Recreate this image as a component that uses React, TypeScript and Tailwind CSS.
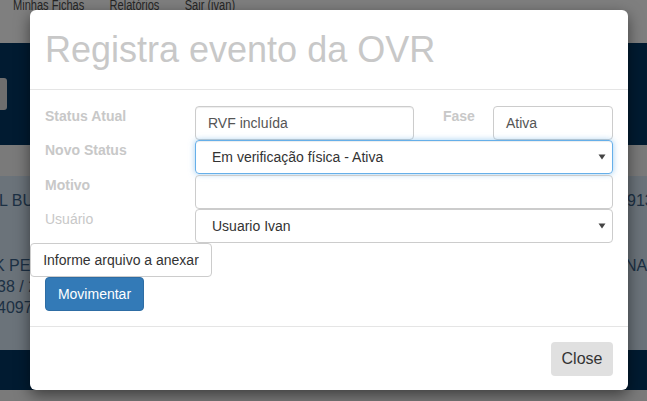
import React from "react";

const font = { fontFamily: '"Liberation Sans", Arial, sans-serif' };

function Arrow() {
  return (
    <svg width="8" height="6" viewBox="0 0 8 6" className="shrink-0">
      <path d="M0.5 0.5 L7.5 0.5 L4 5.5 Z" fill="#444" />
    </svg>
  );
}

export default function App() {
  return (
    <div className="relative w-[647px] h-[401px] overflow-hidden text-[14px]" style={font}>
      {/* background page (already dimmed by overlay) */}
      <div className="flex flex-col w-full h-full">
        <div className="h-[43px] bg-[#7f7f7f] pl-[13px]">
          <div className="flex gap-[32px] text-[14px] text-[#262626] leading-none -mt-[2px] origin-left scale-x-[0.79] whitespace-nowrap">
            <span>Minhas Fichas</span>
            <span>Relatórios</span>
            <span>Sair (ivan)</span>
          </div>
        </div>
        <div className="h-[102px] bg-[#011b31] flex items-center">
          <div className="w-[7px] h-[32px] bg-[#6e6e6e] rounded-r-[3px]" />
        </div>
        <div className="h-[31px] bg-[#7a7a7a]" />
        <div className="h-[174px] bg-[#6b737a] text-[#1c3044] text-[16px] flex justify-between">
          <div className="flex flex-col pt-[13px]">
            <span className="-ml-[1px]">L BUI</span>
            <span className="mt-[42px] -ml-[6px] leading-[21px]">K PE</span>
            <span className="-ml-[3px] leading-[21px]">38 / 2</span>
            <span className="-ml-[3px] leading-[22px]">4097</span>
          </div>
          <div className="flex flex-col pt-[13px] items-start w-[20px]">
            <span>913</span>
            <span className="mt-[42px] -ml-[2px] leading-[21px]">NAC</span>
          </div>
        </div>
        <div className="h-[40px] bg-[#011b31]" />
        <div className="flex-1 bg-[#7a7a7a]" />
      </div>

      {/* modal */}
      <div className="absolute left-[30px] top-[10px] w-[598px] h-[380px] bg-white rounded-[6px] shadow-[0_5px_15px_rgba(0,0,0,0.5)] flex flex-col">
        <div className="h-[80px] border-b border-[#e5e5e5] flex items-center px-[15px]">
          <h4 className="text-[36px] text-[#c8c8c8] leading-none">Registra evento da OVR</h4>
        </div>
        <div className="flex flex-col pt-[16px] pb-[15px] h-[236px]">
          {/* row 1 */}
          <div className="flex h-[34px] pl-[15px]">
            <div className="w-[150px] font-bold text-[#c8c8c8] leading-[20px]">Status Atual</div>
            <div className="w-[219px] h-[34px] border border-[#ccc] rounded-[4px] flex items-center px-[12px] text-[#555] shadow-[inset_0_1px_1px_rgba(0,0,0,0.075)]">
              RVF incluída
            </div>
            <div className="w-[79px] pl-[29px] font-bold text-[#c8c8c8] leading-[20px]">Fase</div>
            <div className="w-[120px] h-[34px] border border-[#ccc] rounded-[4px] flex items-center px-[12px] text-[#555]">
              Ativa
            </div>
          </div>
          {/* row 2 */}
          <div className="flex h-[34px] pl-[15px]">
            <div className="w-[150px] font-bold text-[#c8c8c8] leading-[20px]">Novo Status</div>
            <div className="w-[418px] h-[34px] border border-[#66afe9] rounded-[4px] flex items-center justify-between pl-[16px] pr-[6px] text-[#333] shadow-[inset_0_1px_1px_rgba(0,0,0,0.075),0_0_6px_rgba(102,175,233,0.6)]">
              <span>Em verificação física - Ativa</span>
              <Arrow />
            </div>
          </div>
          {/* row 3 */}
          <div className="flex h-[34px] pl-[15px] mt-[1px]">
            <div className="w-[150px] font-bold text-[#c8c8c8] leading-[20px]">Motivo</div>
            <div className="w-[418px] h-[34px] border border-[#ccc] rounded-[4px]" />
          </div>
          {/* row 4 */}
          <div className="flex h-[34px] pl-[15px]">
            <div className="w-[150px] text-[#c8c8c8] leading-[20px]">Usuário</div>
            <div className="w-[418px] h-[34px] border border-[#ccc] rounded-[4px] flex items-center justify-between pl-[16px] pr-[6px] text-[#333]">
              <span>Usuario Ivan</span>
              <Arrow />
            </div>
          </div>
          <div className="flex">
            <div className="w-[182px] h-[34px] border border-[#ccc] rounded-[4px] flex items-center justify-center text-[#333]">
              Informe arquivo a anexar
            </div>
          </div>
          <div className="flex pl-[15px]">
            <button className="w-[99px] h-[34px] bg-[#337ab7] border border-[#2e6da4] rounded-[4px] text-white">
              Movimentar
            </button>
          </div>
        </div>
        <div className="flex-1 border-t border-[#e5e5e5] flex justify-end items-start pt-[15px] pr-[15px]">
          <button className="w-[62px] h-[34px] bg-[#e0e0e0] rounded-[4px] text-[#333] text-[16px]">Close</button>
        </div>
      </div>
    </div>
  );
}
